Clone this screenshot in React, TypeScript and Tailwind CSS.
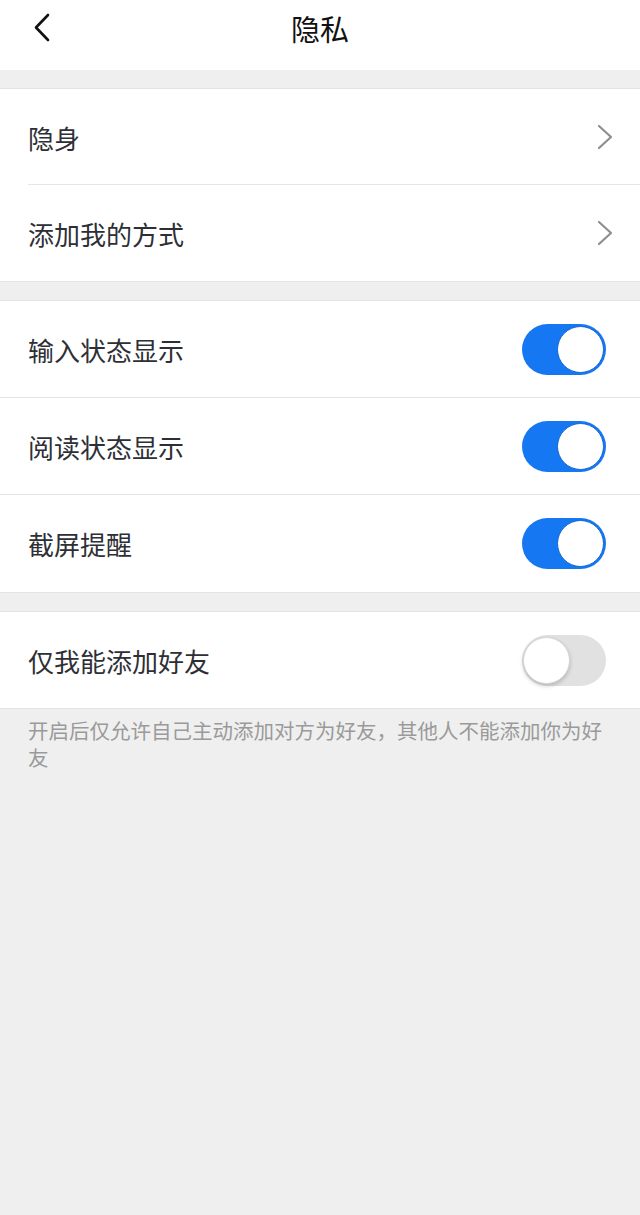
import React, { useState } from 'react';

const font = { fontFamily: '"Noto Sans CJK SC", "Noto Sans", sans-serif' };

function Chevron() {
  return (
    <svg width="18" height="26" viewBox="0 0 18 26" fill="none" className="mr-[26px]">
      <path d="M3 2 L15 13 L3 24" stroke="#8e8e93" strokeWidth="2.2" strokeLinecap="round" strokeLinejoin="round" />
    </svg>
  );
}

function Toggle({ on, onClick }: { on: boolean; onClick: () => void }) {
  return (
    <button
      onClick={onClick}
      className={`relative mr-[34px] h-[51px] w-[84px] rounded-full ${on ? 'bg-[#1677f2]' : 'bg-[#e1e1e1]'}`}
    >
      <span
        className={`absolute top-[2px] h-[47px] w-[47px] rounded-full bg-white ${
          on ? 'right-[2px] border border-[#1167d8]' : 'left-[1px] border border-[#d6d6d6] shadow-[0_2px_4px_rgba(0,0,0,0.2)]'
        }`}
      />
    </button>
  );
}

function Row({
  label,
  children,
  divider,
  tall,
}: {
  label: string;
  children: React.ReactNode;
  divider?: 'inset' | 'full';
  tall?: boolean;
}) {
  return (
    <div className={`relative flex items-center justify-between bg-white ${tall ? 'h-[97px]' : 'h-[96px]'}`}>
      <span className="pl-[28px] text-[26px] text-[#2e2f36]">{label}</span>
      {children}
      {divider === 'inset' && <div className="absolute bottom-0 left-[28px] right-0 h-px bg-[#e6e6e6]" />}
      {divider === 'full' && <div className="absolute bottom-0 left-0 right-0 h-px bg-[#e3e3e3]" />}
    </div>
  );
}

export default function App() {
  const [t, setT] = useState({ input: true, read: true, shot: true, only: false });
  return (
    <div className="min-h-[1215px] bg-[#efefef]" style={font}>
      <div className="relative flex h-[70px] items-center justify-center bg-white">
        <svg width="20" height="30" viewBox="0 0 20 30" fill="none" className="absolute left-[32px] top-[13px]">
          <path d="M16 2 L4 14.5 L16 27" stroke="#111" strokeWidth="2.6" strokeLinecap="round" strokeLinejoin="round" />
        </svg>
        <h1 className="-mt-[12px] text-[29px] text-[#111]">隐私</h1>
      </div>

      <div className="mt-[18px] border-y border-[#e3e3e3]">
        <Row label="隐身" divider="inset"><Chevron /></Row>
        <Row label="添加我的方式"><Chevron /></Row>
      </div>

      <div className="mt-[18px] border-y border-[#e3e3e3]">
        <Row label="输入状态显示" divider="full" tall>
          <Toggle on={t.input} onClick={() => setT({ ...t, input: !t.input })} />
        </Row>
        <Row label="阅读状态显示" divider="full" tall>
          <Toggle on={t.read} onClick={() => setT({ ...t, read: !t.read })} />
        </Row>
        <Row label="截屏提醒" tall>
          <Toggle on={t.shot} onClick={() => setT({ ...t, shot: !t.shot })} />
        </Row>
      </div>

      <div className="mt-[18px] border-y border-[#e3e3e3]">
        <Row label="仅我能添加好友">
          <Toggle on={t.only} onClick={() => setT({ ...t, only: !t.only })} />
        </Row>
      </div>

      <p className="pl-[28px] pr-[20px] pt-[8px] text-[20.5px] leading-[27px] text-[#9a9a9a]">
        开启后仅允许自己主动添加对方为好友，其他人不能添加你为好友
      </p>
    </div>
  );
}
